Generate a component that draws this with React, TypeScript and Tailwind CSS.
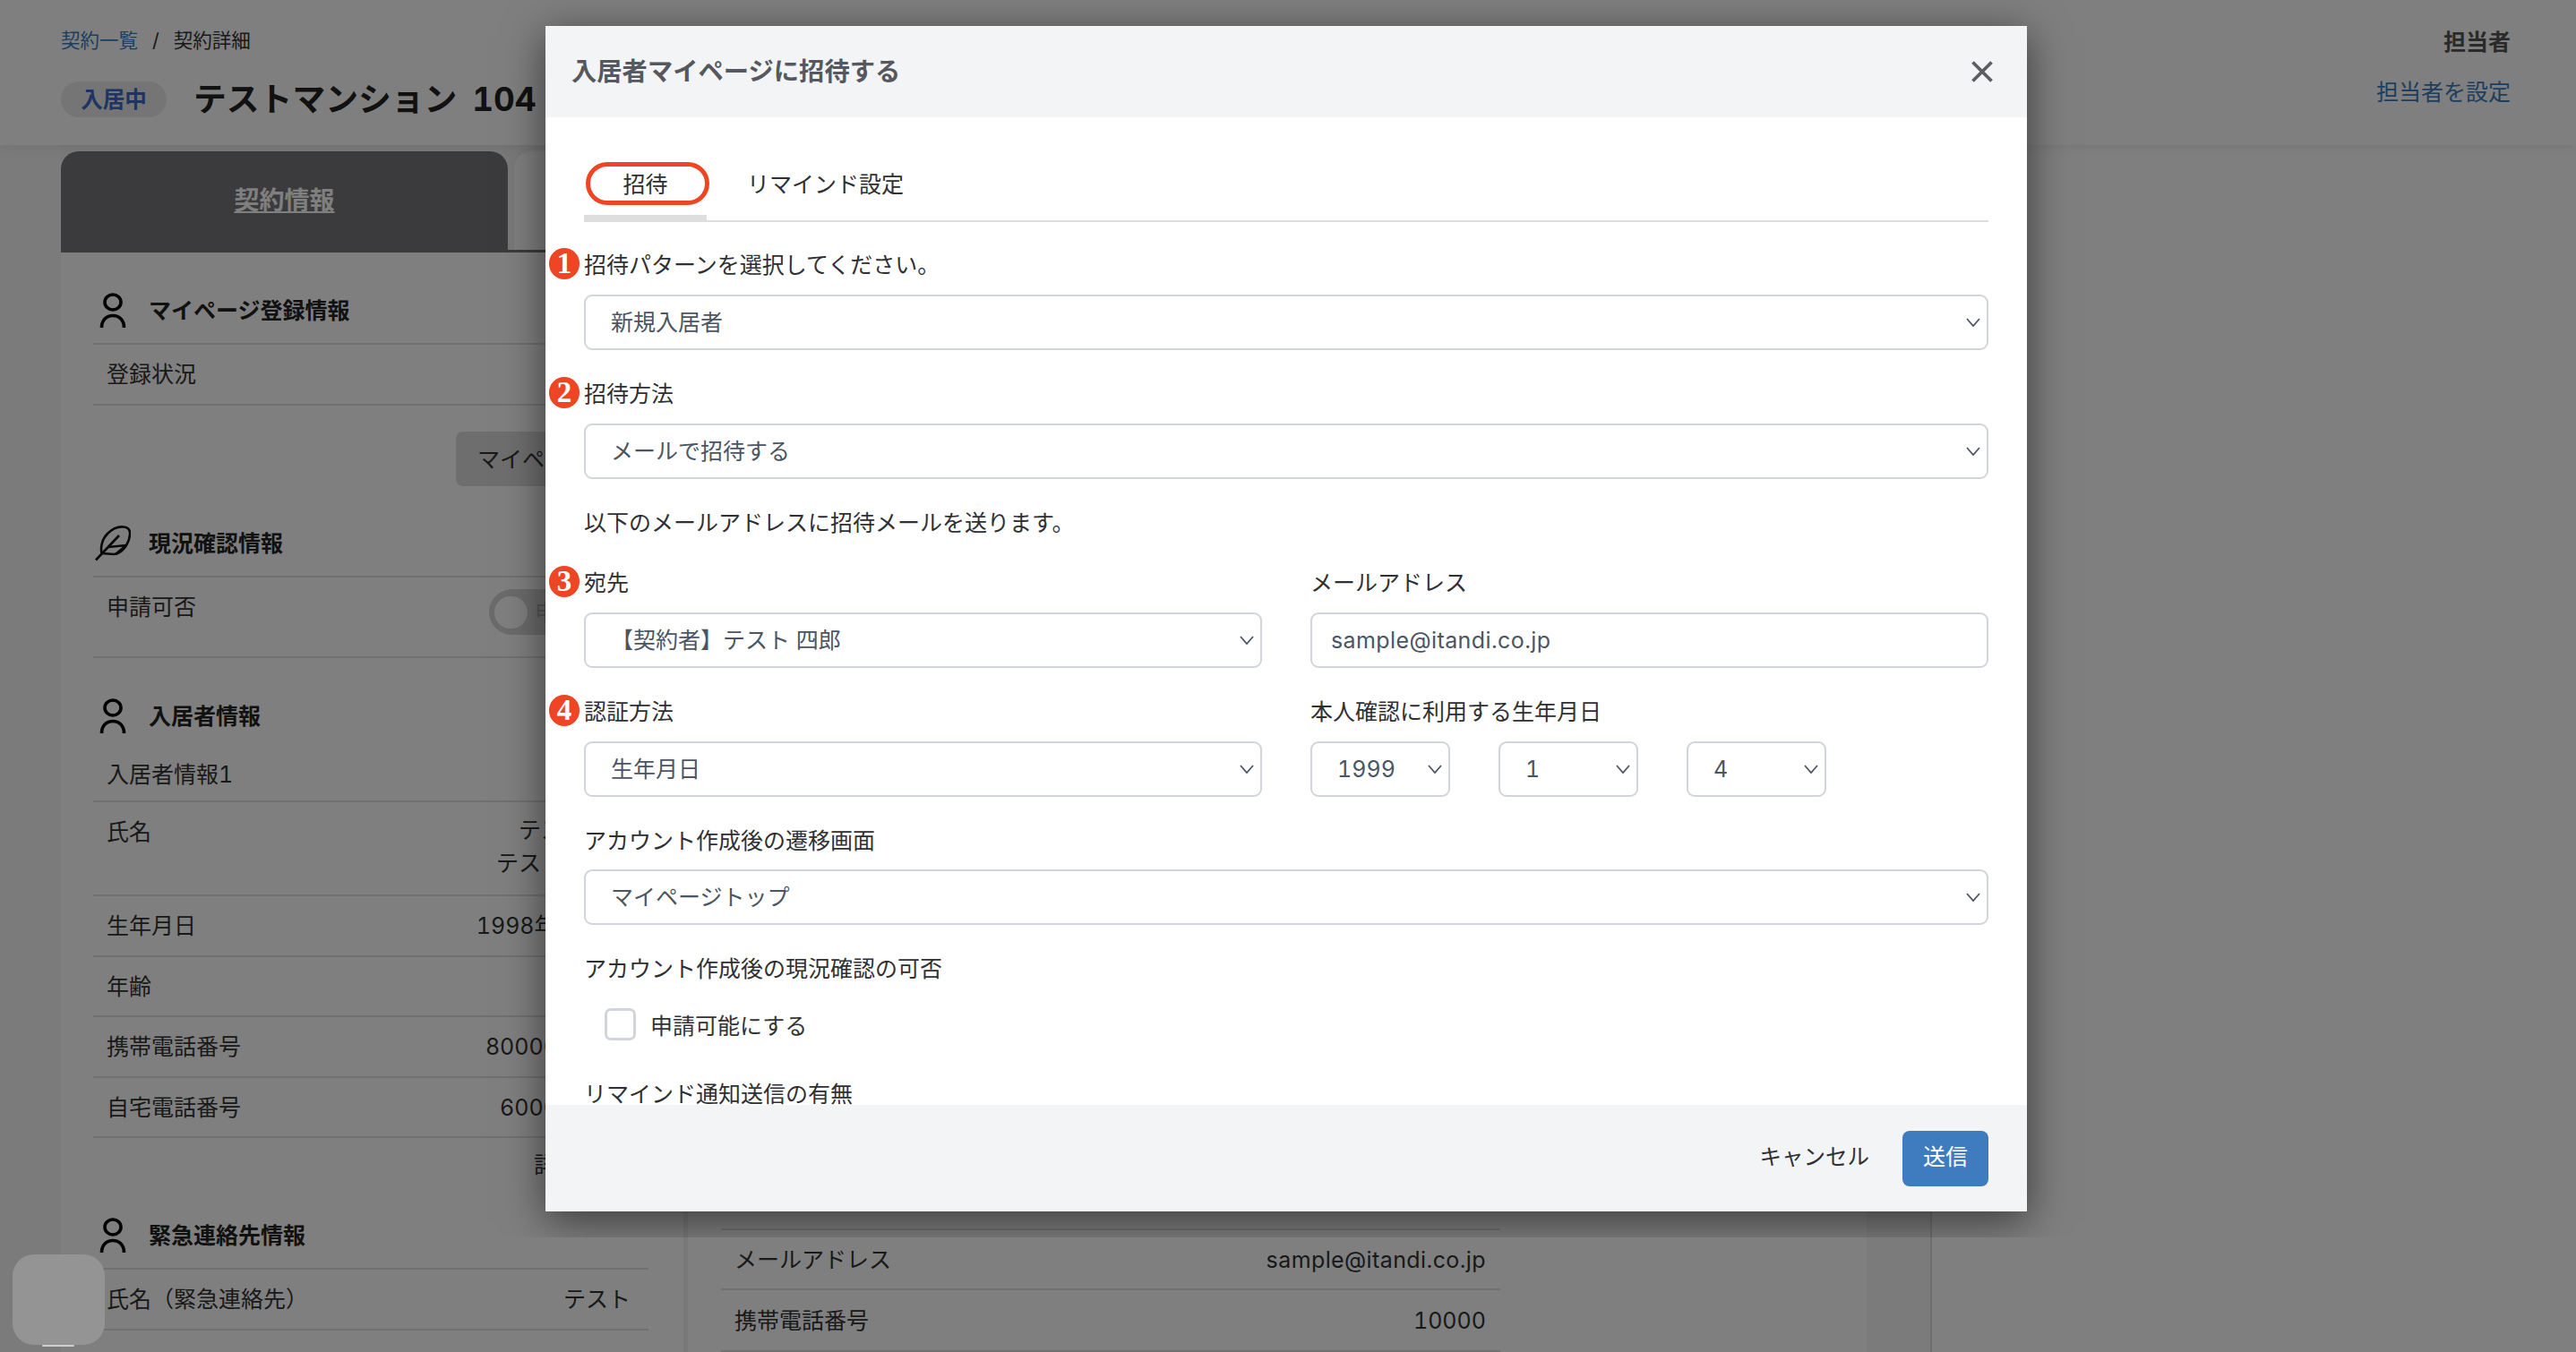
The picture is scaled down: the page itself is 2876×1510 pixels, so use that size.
import React from "react";

function Person() {
  return (
    <svg width="30" height="40" viewBox="0 0 30 40" fill="none" stroke="#000" strokeWidth="3.6" className="shrink-0">
      <ellipse cx="15" cy="10.5" rx="9" ry="8.5" />
      <path d="M2.5 39 C2.5 30.5 8 25.5 15 25.5 C22 25.5 27.5 30.5 27.5 39" />
    </svg>
  );
}

function Feather() {
  return (
    <svg width="40" height="40" viewBox="0 0 40 40" fill="none" stroke="#111" strokeWidth="2.6" strokeLinejoin="round" className="shrink-0">
      <path d="M7.5 31 C6 24 8 15 14 9 C20 3 27 1 32 1.5 C37 2 39.5 5 39 10 C38.5 15 37 20 33 25 C29 30 24 32 21 32 L7.5 31" />
      <path d="M1 38.5 L27 11" />
      <path d="M15 24 L35 22 M35 22 L23 32" />
    </svg>
  );
}

function Chevron() {
  return (
    <svg width="16" height="10" viewBox="0 0 16 10" fill="none" stroke="#4b5563" strokeWidth="1.8" className="pointer-events-none absolute right-[9px] top-1/2 -translate-y-1/2">
      <path d="M1 1 L8 9 L15 1" />
    </svg>
  );
}

function SelectBox({ value }: { value: string }) {
  return (
    <div className="relative">
      <select
        defaultValue={value}
        className="h-[62px] w-full appearance-none rounded-[9px] border-2 border-[#d1d5db] bg-white pl-[28px] pr-[30px] text-[#4b5563] outline-none"
      >
        <option>{value}</option>
      </select>
      <Chevron />
    </div>
  );
}

function Num({ children }: { children: React.ReactNode }) {
  return (
    <span className="absolute left-[-39px] top-[1px] flex h-[35px] w-[34px] items-center justify-center rounded-full bg-[#ee4524] font-['Liberation_Serif',serif] text-[33px] font-bold leading-none text-white">
      {children}
    </span>
  );
}

function Label({ children, num, className }: { children: React.ReactNode; num?: string; className: string }) {
  return (
    <div className={"relative leading-[40px] text-[#2f3033] " + className}>
      {num ? <Num>{num}</Num> : null}
      {children}
    </div>
  );
}

function SectionTitle({ icon, children, line = true }: { icon: React.ReactNode; children: React.ReactNode; line?: boolean }) {
  return (
    <div className={line ? "flex h-[74px] items-center border-b-2 border-[#e0e0e0]" : "flex h-[74px] items-center"}>
      <div className="flex w-[62px] justify-center pr-[18px]">{icon}</div>
      <h3 className="font-bold text-[#222]">{children}</h3>
    </div>
  );
}

function Row({ label, value, className = "h-[68px]" }: { label: string; value?: string; className?: string }) {
  return (
    <div className={"flex items-center justify-between border-b-2 border-[#e0e0e0] pl-[15px] pr-[20px] text-[#333] " + className}>
      <span>{label}</span>
      {value ? <span>{value}</span> : null}
    </div>
  );
}

export default function App() {
  return (
    <div className="relative h-[1510px] w-[2876px] overflow-hidden bg-[#f6f6f6] font-['Inter','Noto_Sans_CJK_JP',sans-serif] text-[25px] leading-[40px] tabular-nums">
      <header className="relative z-10 flex h-[162px] justify-between bg-white pl-[68px] pr-[73px] shadow-[0_2px_14px_rgba(0,0,0,0.08)]">
        <div className="pt-[30px]">
          <nav className="flex items-center text-[21.5px] leading-[30px] text-[#333]">
            <a className="text-[#3d7cbf]">契約一覧</a>
            <span className="mx-[16px]">/</span>
            <span>契約詳細</span>
          </nav>
          <div className="mt-[31px] flex items-center gap-[30px]">
            <span className="flex h-[40px] w-[118px] items-center justify-center rounded-full bg-[#eaeaea] text-[24.5px] font-bold text-[#3d69c4]">入居中</span>
            <h1 className="whitespace-nowrap text-[36.8px] font-bold text-[#222] [word-spacing:7px]">テストマンション 104</h1>
          </div>
        </div>
        <div className="pt-[32px] text-right leading-[30px]">
          <div className="font-bold text-[#555]">担当者</div>
          <a className="mt-[26px] block text-[#3d7cbf]">担当者を設定</a>
        </div>
      </header>

      <main className="flex h-[1348px]">
        <div className="w-[68px] shrink-0" />
        <section className="flex w-[2016px] shrink-0 flex-col bg-white">
          <div className="flex h-[120px] shrink-0 gap-[7px] border-b-[3px] border-[#76777b] bg-[#f3f3f3]">
            <div className="mt-[7px] flex h-[113px] w-[499px] items-center justify-center rounded-t-[20px] bg-[#76777b] pb-[3px] text-[28px] font-bold text-white underline">
              契約情報
            </div>
            <div className="mt-[7px] flex h-[110px] w-[499px] items-center justify-center rounded-t-[20px] bg-white text-[28px] font-bold text-[#333]">
              物件情報
            </div>
          </div>
          <div className="flex min-h-0 flex-1">
            <div className="w-[695px] shrink-0 pl-[36px] pr-[39px]">
              <div className="mt-[29px]">
                <SectionTitle icon={<Person />}>マイページ登録情報</SectionTitle>
                <Row label="登録状況" value="未登録" />
                <div className="mt-[29px] flex justify-end pr-[20px]">
                  <button className="h-[61px] w-[195px] overflow-hidden whitespace-nowrap rounded-[8px] bg-[#dcdcdc] pl-[24px] text-left text-[#333]">マイページ招待</button>
                </div>
              </div>
              <div className="mt-[28px]">
                <SectionTitle icon={<Feather />}>現況確認情報</SectionTitle>
                <div className="flex h-[90px] items-start justify-between border-b-2 border-[#e0e0e0] pl-[15px] pr-[20px] pt-[13px] text-[#333]">
                  <span>申請可否</span>
                  <div className="flex h-[51px] w-[158px] items-center overflow-hidden whitespace-nowrap rounded-full bg-[#d6d6d6] px-[6px]">
                    <span className="h-[36px] w-[37px] shrink-0 rounded-full bg-white" />
                    <span className="ml-[8px] text-[#aaa]">申請不可</span>
                  </div>
                </div>
              </div>
              <div className="mt-[28px]">
                <SectionTitle icon={<Person />} line={false}>入居者情報</SectionTitle>
                <Row label="入居者情報1" className="h-[59px] pb-[2px]" />
                <div className="flex h-[105px] items-start justify-between border-b-2 border-[#e0e0e0] pl-[15px] pr-[20px] pt-[13px] text-[#333]">
                  <span>氏名</span>
                  <span className="text-right leading-[37px]">テスト四郎<br />テストシロウ</span>
                </div>
                <Row label="生年月日" value="1998年1月1日" />
                <Row label="年齢" value="27歳" className="h-[67px]" />
                <Row label="携帯電話番号" value="8000000000" />
                <Row label="自宅電話番号" value="600000000" className="h-[67px]" />
                <div className="flex h-[60px] items-center justify-end pr-[3px] text-[#333]">詳細を見る</div>
              </div>
              <div className="mt-[13px]">
                <SectionTitle icon={<Person />}>緊急連絡先情報</SectionTitle>
                <Row label="氏名（緊急連絡先）" value="テスト" />
              </div>
            </div>
            <div className="flex-1 border-l-[5px] border-[#f0f0f0] pl-[37px]">
              <div className="w-[870px]">
                <div className="h-[1092px] border-b-2 border-[#e0e0e0]" />
                <div className="flex h-[67px] items-center justify-between border-b-2 border-[#e0e0e0] pl-[15px] pr-[16px] text-[#333]">
                  <span>メールアドレス</span>
                  <span className="tracking-[0.4px]">sample@itandi.co.jp</span>
                </div>
                <div className="flex h-[69px] items-center justify-between border-b-2 border-[#e0e0e0] pl-[15px] pr-[16px] text-[#333]">
                  <span>携帯電話番号</span>
                  <span>10000</span>
                </div>
              </div>
            </div>
          </div>
        </section>
        <div className="w-[71px] shrink-0" />
        <aside className="flex-1 border-l-2 border-[#dcdcdc] bg-white" />
      </main>

      {/* dimmed backdrop */}
      <div className="absolute inset-0 z-20 bg-black/50" />

      {/* floating widget */}
      <div className="absolute left-[14px] top-[1401px] z-30 h-[101px] w-[103px] rounded-[24px] bg-[#949494]">
        <div className="absolute bottom-[-2px] left-[33px] h-[2px] w-[36px] rounded-full bg-[#cfcfcf]" />
      </div>

      {/* modal */}
      <div className="absolute left-0 top-0 z-40 h-[1382px] w-full overflow-hidden">
        <div className="absolute left-[609px] top-[29px] flex h-[1324px] w-[1654px] flex-col bg-white shadow-[0_10px_44px_rgba(0,0,0,0.55)]">
          <div className="flex h-[102px] shrink-0 items-center justify-between bg-[#f3f4f6] pl-[29px] pr-[38px]">
            <h2 className="text-[28.3px] font-bold text-[#565860]">入居者マイページに招待する</h2>
            <svg width="24" height="24" viewBox="0 0 24 24" fill="none" stroke="#5c5c63" strokeWidth="3.8">
              <path d="M1.5 1.5 L22.5 22.5 M22.5 1.5 L1.5 22.5" />
            </svg>
          </div>

          <div className="min-h-0 flex-1 overflow-hidden px-[43px] pt-[44px]">
            <div className="flex h-[73px] border-b-2 border-[#dddddd] text-[#2f3033]">
              <div className="relative h-[73px] w-[137px] border-b-8 border-[#dedede] pt-[11px] text-center">
                招待
                <span className="absolute left-[2px] top-[6px] h-[48px] w-[138px] rounded-full border-[5px] border-[#ee4524]" />
              </div>
              <div className="h-[73px] pl-[45px] pt-[11px]">リマインド設定</div>
            </div>

            <Label num="1" className="mt-[28px]">招待パターンを選択してください。</Label>
            <div className="mt-[13px]"><SelectBox value="新規入居者" /></div>

            <Label num="2" className="mt-[29px]">
              招待方法
            </Label>
            <div className="mt-[13px]"><SelectBox value="メールで招待する" /></div>

            <Label className="mt-[29px]">以下のメールアドレスに招待メールを送ります。</Label>

            <div className="mt-[27px] grid grid-cols-2 gap-x-[54px]">
              <div>
                <Label num="3" className="">宛先</Label>
                <div className="mt-[13px]"><SelectBox value="【契約者】テスト 四郎" /></div>
              </div>
              <div>
                <Label className="">メールアドレス</Label>
                <input
                  defaultValue="sample@itandi.co.jp"
                  className="mt-[13px] h-[62px] w-full rounded-[9px] border-2 border-[#d1d5db] bg-white px-[21px] tracking-[0.4px] text-[#4b5563] outline-none"
                />
              </div>
            </div>

            <div className="mt-[29px] grid grid-cols-2 gap-x-[54px]">
              <div>
                <Label num="4" className="">認証方法</Label>
                <div className="mt-[13px]"><SelectBox value="生年月日" /></div>
              </div>
              <div>
                <Label className="">本人確認に利用する生年月日</Label>
                <div className="mt-[13px] flex gap-[54px]">
                  <div className="w-[156px]"><SelectBox value="1999" /></div>
                  <div className="w-[156px]"><SelectBox value="1" /></div>
                  <div className="w-[156px]"><SelectBox value="4" /></div>
                </div>
              </div>
            </div>

            <Label className="mt-[29px]">アカウント作成後の遷移画面</Label>
            <div className="mt-[12px]"><SelectBox value="マイページトップ" /></div>

            <Label className="mt-[29px]">アカウント作成後の現況確認の可否</Label>
            <label className="mt-[22px] flex h-[40px] items-center pl-[23px] text-[#333]">
              <input type="checkbox" className="h-[36px] w-[35px] appearance-none rounded-[7px] border-[3.5px] border-[#d1d5db] bg-white" />
              <span className="ml-[16px] pt-[3px]">申請可能にする</span>
            </label>

            <Label className="mt-[38px]">リマインド通知送信の有無</Label>
          </div>

          <div className="flex h-[119px] shrink-0 items-center justify-end bg-[#f3f4f6] pr-[43px]">
            <button className="pb-[3px] text-[24.5px] text-[#2f3033]">キャンセル</button>
            <button className="ml-[37px] h-[62px] w-[96px] rounded-[8px] bg-[#3e7cbf] pb-[3px] text-white">送信</button>
          </div>
        </div>
      </div>
    </div>
  );
}
